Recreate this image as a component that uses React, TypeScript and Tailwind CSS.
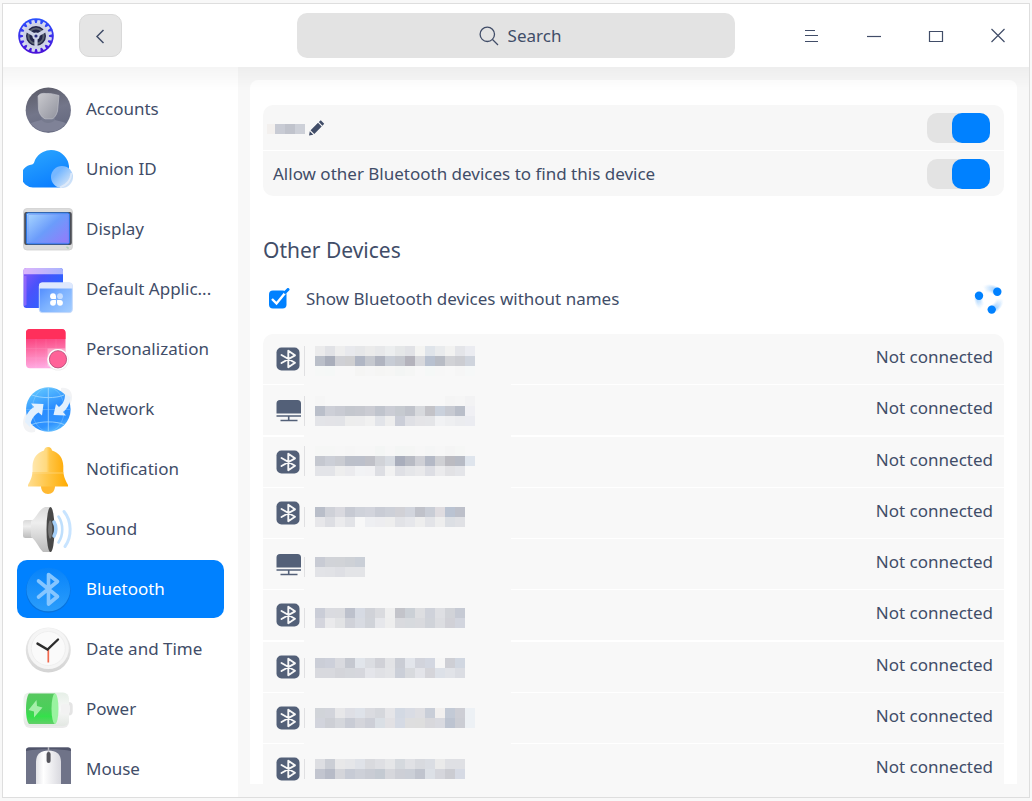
import type { ReactNode } from "react";

function Svg({ children }: { children: ReactNode }) {
  return (
    <svg viewBox="0 0 50 50" className="size-[50px] shrink-0" aria-hidden="true">
      {children}
    </svg>
  );
}

const icons: Record<string, ReactNode> = {
  accounts: (
    <Svg>
      <defs>
        <linearGradient id="ac1" x1="0" y1="0" x2="0.3" y2="1">
          <stop offset="0" stopColor="#5a5a66" />
          <stop offset="0.6" stopColor="#73768a" />
          <stop offset="1" stopColor="#666a80" />
        </linearGradient>
        <linearGradient id="ac2" x1="0" y1="0" x2="1" y2="1">
          <stop offset="0" stopColor="#c9c9ce" />
          <stop offset="1" stopColor="#90929d" />
        </linearGradient>
        <clipPath id="acc"><circle cx="25.3" cy="26.2" r="22" /></clipPath>
      </defs>
      <circle cx="25.3" cy="26.2" r="22.6" fill="url(#ac1)" />
      <g clipPath="url(#acc)">
        <path d="M1 50 V43 C7 38 13 38 18 36 H32 C38 38 44 38 50 43 V50Z" fill="#7f8297" />
        <path d="M1 50 V44 C12 49 38 49 50 44 V50Z" fill="#50556b" />
        <path d="M18.5 30 H32 V36 C28 40 22 40 18.5 36Z" fill="#767a8e" />
      </g>
      <path d="M15 12 C17 9.500 20 9 23 9.600 C28 9 31 10.500 36 11.500 L34.500 27 C33.500 31 31 34.500 29 34.800 H22 C18 33 16 29 15.500 25Z" fill="url(#ac2)" stroke="#bfc0c8" strokeWidth="0.7" />
    </Svg>
  ),
  cloud: (
    <Svg>
      <defs>
        <linearGradient id="cl1" x1="0.2" y1="0" x2="0.7" y2="1">
          <stop offset="0" stopColor="#2ba6ff" />
          <stop offset="1" stopColor="#0a7dff" />
        </linearGradient>
        <linearGradient id="cl2" x1="0" y1="0" x2="1" y2="1">
          <stop offset="0.3" stopColor="#76b7ff" />
          <stop offset="0.75" stopColor="#c5ddf8" />
          <stop offset="1" stopColor="#e4eefb" />
        </linearGradient>
      </defs>
      <path d="M11 43.5 A11 11 0 0 1 9 20.5 C11 19.5 11 19 12 16 A18 18 0 0 1 46 22 V35 C45 40 42 43.5 38 43.5Z" fill="url(#cl1)" />
      <circle cx="39" cy="33" r="11" fill="url(#cl2)" />
      <path d="M37 43.5 C44 41 48 36 48.5 29" fill="none" stroke="#e9f0fa" strokeWidth="2" opacity="0.7" />
    </Svg>
  ),
  display: (
    <Svg>
      <defs>
        <linearGradient id="di1" x1="0" y1="0.1" x2="1" y2="0.9">
          <stop offset="0" stopColor="#a6d4ff" />
          <stop offset="0.5" stopColor="#6b9cfb" />
          <stop offset="1" stopColor="#937bfa" />
        </linearGradient>
      </defs>
      <rect x="0.5" y="4.5" width="49" height="41.5" rx="3.5" fill="#dcdcdc" stroke="#cfcfcf" strokeWidth="0.8" />
      <rect x="1.2" y="8" width="47.6" height="33" rx="2" fill="#4b4d55" />
      <rect x="3.4" y="8.9" width="43" height="31" rx="1.5" fill="url(#di1)" stroke="#2676e8" strokeWidth="1" />
      <rect x="5" y="10.5" width="40" height="28" rx="1" fill="none" stroke="#6f8cf5" strokeWidth="0.5" />
      <path d="M44 42.5 v1.5 h2" fill="none" stroke="#9fc8a8" strokeWidth="0.9" />
    </Svg>
  ),
  apps: (
    <Svg>
      <defs>
        <linearGradient id="ap1" x1="0" y1="0" x2="0.8" y2="0.6">
          <stop offset="0" stopColor="#8a55f7" />
          <stop offset="0.5" stopColor="#4a52fb" />
          <stop offset="1" stopColor="#2e62ff" />
        </linearGradient>
        <linearGradient id="ap2" x1="0" x2="1">
          <stop offset="0" stopColor="#dcb4fb" />
          <stop offset="1" stopColor="#a9b4fd" />
        </linearGradient>
        <linearGradient id="ap3" x1="0" y1="0" x2="1" y2="1">
          <stop offset="0" stopColor="#4a86ff" />
          <stop offset="0.5" stopColor="#7db2ff" />
          <stop offset="1" stopColor="#a5ceff" />
        </linearGradient>
      </defs>
      <rect x="0.5" y="4" width="39.5" height="40" rx="3" fill="url(#ap1)" />
      <path d="M0.5 10.2 V7 a3 3 0 0 1 3-3 H37 a3 3 0 0 1 3 3 V10.2Z" fill="url(#ap2)" />
      <path d="M1 42 V12 h2.5 V41Z" fill="#a070fa" opacity="0.7" />
      <rect x="16.3" y="19" width="33" height="29.6" rx="3" fill="url(#ap3)" stroke="#c4d9fb" strokeWidth="1" />
      <path d="M16 24.5 V21.5 a3 3 0 0 1 3-3 H46.7 a3 3 0 0 1 3 3 V24.5Z" fill="#dfe9fd" />
      <g fill="#fff">
        <circle cx="30" cy="32.2" r="2.9" /><circle cx="37" cy="32.2" r="2.9" opacity="0.55" />
        <circle cx="30" cy="38.8" r="2.9" /><circle cx="37" cy="38.8" r="2.9" />
        <path d="M30 32 h2.9 v3 h-2.9z M34.1 36 h2.9 v3 h-2.9z M30 36 h2.9 v3 h-2.9z" />
      </g>
    </Svg>
  ),
  personal: (
    <Svg>
      <defs>
        <linearGradient id="pe1" x1="0.2" y1="0" x2="0.3" y2="1">
          <stop offset="0.25" stopColor="#fb4581" />
          <stop offset="0.6" stopColor="#fd78ae" />
          <stop offset="1" stopColor="#ffabe3" />
        </linearGradient>
      </defs>
      <rect x="3" y="5" width="39.5" height="39.3" rx="4" fill="url(#pe1)" />
      <path d="M13 15 V44 M23 15 V44 M33 15 V44 M3 24.5 H42 M3 34 H42" stroke="#fff" strokeWidth="0.5" opacity="0.15" />
      <path d="M3 15 V9 a4 4 0 0 1 4-4 H38.5 a4 4 0 0 1 4 4 V15Z" fill="#ff2f5b" />
      <rect x="24.5" y="24.5" width="18" height="18" fill="#fff" opacity="0.35" />
      <circle cx="35" cy="35.8" r="10.8" fill="#ededed" />
      <circle cx="35" cy="35.3" r="10.4" fill="#fff" />
      <circle cx="35" cy="35.3" r="8.6" fill="#ff6298" stroke="#b8507a" strokeWidth="0.9" />
    </Svg>
  ),
  network: (
    <Svg>
      <defs>
        <linearGradient id="ne1" x1="0.3" y1="0" x2="0.7" y2="1">
          <stop offset="0" stopColor="#60c6ff" />
          <stop offset="0.5" stopColor="#2a8dff" />
          <stop offset="0.8" stopColor="#2f93ff" />
          <stop offset="1" stopColor="#5abcff" />
        </linearGradient>
      </defs>
      <path d="M38 4 C45 3 49 7 49 13 C49 19 46 24 41 28 L38 20Z M12 48 C3 50 0 44 0 38 C1 32 3 27 7 24 L14 32Z" fill="#f2f3f5" />
      <circle cx="25.3" cy="25.5" r="22.3" fill="url(#ne1)" />
      <g fill="none" stroke="#a9dcff" strokeWidth="0.9">
        <ellipse cx="25.3" cy="25.5" rx="16" ry="22" opacity="0.35" />
        <path d="M3 25.5 H47.5" opacity="0.35" />
        <path d="M25.3 3.5 V47.5 M9 11 C18 14.5 33 14.5 41 11 M9 40.5 C18 37 33 37 41 40.5" opacity="0.85" />
      </g>
      <path d="M2 38 C3 30 6 26 11 23 L8 19.5 L20.5 20 L19 31.5 L15.5 28.5 C10 32 8 36 7 43Z" fill="#e2f0fe" />
      <path d="M47.5 13 C47 20 44 25 40 28 L43 31.5 L30.5 31 L33 20 L36 23 C40 20 42 16 42 10Z" fill="#e2f0fe" />
    </Svg>
  ),
  bell: (
    <Svg>
      <defs>
        <linearGradient id="be1" x1="0" x2="1">
          <stop offset="0" stopColor="#ffe7ad" />
          <stop offset="0.45" stopColor="#ffd97e" />
          <stop offset="0.55" stopColor="#ffc648" />
          <stop offset="1" stopColor="#ffae0e" />
        </linearGradient>
        <linearGradient id="be2" x1="0" x2="1">
          <stop offset="0" stopColor="#ffdd90" />
          <stop offset="0.5" stopColor="#ffc545" />
          <stop offset="1" stopColor="#ffab00" />
        </linearGradient>
      </defs>
      <path d="M18 42 H32 C32 47 29 50 25 50 C21 50 18 47 18 42Z" fill="#ffb931" />
      <path d="M25 3 C27.5 3 28.5 4.5 29 6.5 C36 8.5 40 14 40.3 22 V28.5 H9.5 V22 C10 14 14 8.5 21 6.5 C21.5 4.5 22.5 3 25 3Z" fill="url(#be1)" />
      <path d="M9.5 28 H40.3 C41 34 43 37 45 41 V42.5 H5 V41 C7 37 9 34 9.500 28Z" fill="url(#be2)" />
      <path d="M9.5 29 H40.3" stroke="#ffe3a0" strokeWidth="0.9" opacity="0.6" />
    </Svg>
  ),
  sound: (
    <Svg>
      <defs>
        <linearGradient id="so1" x1="0" y1="0" x2="0" y2="1">
          <stop offset="0" stopColor="#d9d9d9" />
          <stop offset="0.35" stopColor="#eeeeee" />
          <stop offset="1" stopColor="#bcbcbc" />
        </linearGradient>
      </defs>
      <rect x="0" y="16" width="11" height="18" rx="2.5" fill="url(#so1)" />
      <path d="M8 17 C13 15 15 6 22 3 H28 V48 H20 C15 43 13 36 8 33Z" fill="url(#so1)" />
      <ellipse cx="27.5" cy="25.5" rx="4" ry="22.5" fill="#484848" />
      <path d="M27 16 C30 18 30 33 27 35 C24.5 32 24.5 19 27 16Z" fill="#777" />
      <g fill="none" strokeLinecap="round">
        <path d="M31 18 C33.5 22 33.5 28 31 32" stroke="#a5cff8" strokeWidth="3.5" />
        <path d="M35.5 12.5 C40.5 20 40.5 31 35.5 38.5" stroke="#bfdffc" strokeWidth="2.6" />
        <path d="M41 7.5 C49 17 49 33 42 42.5" stroke="#c8e4ff" strokeWidth="3" />
      </g>
    </Svg>
  ),
  bluetooth: (
    <Svg>
      <defs>
        <linearGradient id="bl1" x1="0" y1="0" x2="0" y2="1">
          <stop offset="0" stopColor="#0783fa" />
          <stop offset="1" stopColor="#2b9dfb" />
        </linearGradient>
      </defs>
      <circle cx="25.3" cy="26.5" r="22.3" fill="#0873dd" />
      <circle cx="25.3" cy="25.5" r="21.8" fill="url(#bl1)" />
      <path d="M15.500 17 L34.500 32.500 L25.5 40 V10.5 L34.500 17.500 L15.500 33" fill="none" stroke="#86c6ff" strokeWidth="3.6" strokeLinejoin="round" strokeLinecap="round" />
    </Svg>
  ),
  clock: (
    <Svg>
      <defs>
        <linearGradient id="ck1" x1="0" y1="0" x2="0" y2="1">
          <stop offset="0" stopColor="#eeeeee" />
          <stop offset="1" stopColor="#d4d4d4" />
        </linearGradient>
      </defs>
      <circle cx="25.3" cy="26" r="22.5" fill="url(#ck1)" />
      <circle cx="25.3" cy="24.5" r="20.5" fill="#f5f5f5" />
      <circle cx="25.3" cy="24.5" r="17" fill="#fafafa" stroke="#ececec" strokeWidth="0.8" />
      <path d="M25.3 25.5 V38.500" stroke="#f0694e" strokeWidth="1.7" />
      <path d="M14.5 19.6 L24.5 25.5 L35 15.5" fill="none" stroke="#2c2c2c" strokeWidth="2.4" strokeLinecap="round" />
    </Svg>
  ),
  power: (
    <Svg>
      <defs>
        <linearGradient id="po1" x1="0" y1="0" x2="0" y2="1">
          <stop offset="0" stopColor="#58c860" />
          <stop offset="0.55" stopColor="#48d058" />
          <stop offset="0.75" stopColor="#34e04a" />
          <stop offset="1" stopColor="#62cf69" />
        </linearGradient>
        <linearGradient id="po2" x1="0" y1="0" x2="0" y2="1">
          <stop offset="0" stopColor="#e6efe7" />
          <stop offset="0.5" stopColor="#f8f8f8" />
          <stop offset="1" stopColor="#e3e8e3" />
        </linearGradient>
      </defs>
      <rect x="1" y="11" width="45" height="33" rx="6" fill="#000" opacity="0.08" />
      <rect x="40" y="18" width="9.7" height="13.5" rx="4" fill="#e4e4e4" />
      <rect x="0.5" y="8.5" width="45.5" height="33.5" rx="6" fill="url(#po2)" />
      <path d="M6 9.5 H32 V40 H6 C2 36 2 14 6 9.5Z" fill="url(#po1)" />
      <ellipse cx="32" cy="24.8" rx="3.5" ry="15.3" fill="#9af3a0" />
      <rect x="38" y="20" width="9" height="10" rx="3" fill="#f2f2f2" />
      <path d="M13.5 16 L5.5 26 L11 27.5 L11 33.500 L19.5 23.5 L14 22Z" fill="#a5efa9" />
    </Svg>
  ),
  mouse: (
    <Svg>
      <defs>
        <linearGradient id="mo1" x1="0" x2="1">
          <stop offset="0" stopColor="#e2e2e6" />
          <stop offset="0.3" stopColor="#ffffff" />
          <stop offset="1" stopColor="#d9d9df" />
        </linearGradient>
      </defs>
      <rect x="3" y="3.5" width="45" height="46" rx="3" fill="#6f7388" />
      <path d="M3 7 V6.5 a3 3 0 0 1 3-3 H45 a3 3 0 0 1 3 3 V7 C40 4.5 11 4.500 3 7Z" fill="#50546a" />
      <path d="M13 18 C13 10 18 6.5 25.5 6.5 C33 6.5 38 10 38 18 V50 H13Z" fill="url(#mo1)" />
      <path d="M25.5 3 V9" stroke="#b5b5bd" strokeWidth="1.5" />
      <rect x="23.600" y="8" width="4" height="11" rx="2" fill="#55555c" />
    </Svg>
  ),
};

const nav = [
  ["accounts", "Accounts"],
  ["cloud", "Union ID"],
  ["display", "Display"],
  ["apps", "Default Applic..."],
  ["personal", "Personalization"],
  ["network", "Network"],
  ["bell", "Notification"],
  ["sound", "Sound"],
  ["bluetooth", "Bluetooth"],
  ["clock", "Date and Time"],
  ["power", "Power"],
  ["mouse", "Mouse"],
];

type Device = { kind: "bt" | "pc"; y: number; rows: string[] };

/* Each string lists the hex colours of one row of 10px blocks hiding a device name. */
const devices: Device[] = [
  { kind: "bt", y: 12, rows: [
    "ebebec e1e2e6 eeeeee e8e9ed e6e7e9 ebebeb e7e8ea eceeef e5e7e8 e1e2e6 f4f4f2 dfe4ea e9ebed f2f2f1 e4e5e9 ebecf1",
    "babfc9 a9aebb cfd0d5 cfcfd1 b0b6c4 c5c8cf b0b4c0 c7ccd5 c4c7ce b4b3bc d7d8dc b8c1d0 b8bcc5 d1d2d6 cccdd2 cfd4dd",
    "f6f8f7 f5f8f7 f8f8f8 f8f8f8 f5f5f4 f6f6f6 f5f5f4 f6f6f5 f3f5f4 f5f6f5 f8f8f8 f5f8f7 f7f7f7 f8f8f8 f6f6f6 f6f8f8" ] },
  { kind: "pc", y: 11, rows: [
    "f6f6f6 f8f8f8 f8f8f8 f8f8f8 f8f8f8 f8f8f8 f8f8f8 f8f8f8 f8f8f8 f8f8f8 f8f8f8 f8f8f8 f8f8f8 f5f5f5 f6f6f6 f3f3f4",
    "babfca cdcfd7 c9cbd3 c4c7ce c6c8cf cbccd3 c0c4cd cbcdd5 c6cad0 c0c3cb d7d9dd c3c3c8 cad1dc c7cad2 b9bec9 f0f0f4",
    "e3e4e8 e3e3e7 e2e3e7 ededed ededee f1f1f1 e2e4e9 eeeeee cbced8 dfe0e5 e4e4e7 e4e5e8 f1f2f4 eeeff1 ebecef ebecf1" ] },
  { kind: "bt", y: 9, rows: [
    "f6f7f6 f6f7f6 f7f7f7 f6f6f6 f7f7f7 f7f7f7 f4f6f5 f7f7f7 f4f6f5 f5f6f5 f7f7f7 f5f6f6 f7f7f7 f5f5f5 f6f7f6 f8f8f8",
    "c5c8d0 cccfd7 caccd2 bcc0ca bcc0cb c0c1c8 d1d3d8 d8dce2 a9aebc b8bbc4 cfd0d6 b4b9c6 cfd0d4 bbbbc1 b7bbc5 dfe5ed",
    "e3e4e8 e3e4e8 eeeeee ebebee f2f3f5 f2f2f4 dddee3 f2f2f2 dfe0e5 e5e6e9 e9e9eb dddee4 ebebed e2e2e5 e4e5e9 f8f8f8" ] },
  { kind: "bt", y: 19, rows: [
    "b9bec9 cfd1d8 d9d9df c7cad3 cfd2da d2d4dc c9ccd5 cdd0d8 d1d1d6 d2d5dd c0c2ca c9cdd6 dfdce0 bac3d2 bdc0ca",
    "e7e7ea dddee3 ebebed e2e3e7 f8f8f8 eeeff2 ededf0 eeeeee e2e3e7 e6e7eb eeeeee e3e4e8 eeeeee dcdfe4 e0e1e5" ] },
  { kind: "pc", y: 18, rows: ["c8cbd4 d1d3d8 d1d3d7 ced1d6 cacfd7", "e2e3e7 e1e2e6 dedfe4 e3e4e7 e3e4e7"] },
  { kind: "bt", y: 18, rows: [
    "cacdd7 dadbe0 dadbdf bdc1cc d6dae3 d0d2d8 dadbdf efefef c3c4ca cbd0d6 dddee1 cfd2da dedfe3 d1d3d8 c6cad4",
    "d4d5dd eaeaec e2e3e5 d0d2d9 d8dbe2 d0d3d9 e6e7eb eeeeee d9dade d7dade d9dade d0d3d9 dcdde1 d1d1d7 d2d5de" ] },
  { kind: "bt", y: 16, rows: [
    "cbced7 cdd0da d9dadf c5c8d0 e1e5eb dbdde2 d0d1d7 e2e3e6 cacdd5 e2e5eb d2d4dc d3d7e1 f6f6f6 cecfd5 d1d7e1",
    "d8d9de d8d9de d4d5da d5d7dc d6d7dd e4e5ea e0e1e5 e3e4e7 cbcfd8 d8dade e3e4e9 d5d5da dde1e8 e1e3e8 dbdde3" ] },
  { kind: "bt", y: 15, rows: [
    "d1d4d9 d2d4db e7e7e9 dedfe5 dee2e9 dadbe0 d5d7dc e5e5e8 d3d9e3 d9dce4 dedee2 c9ced8 f2f0ef c3cad6 cdced5 edf1f5",
    "d2d4dc cdcfd5 d5d7dc c9ccd5 d4d5db cdcfd7 dadfe5 e2e1e4 d5dae4 dededf dedede d8d8dc d9dae0 bdc4d1 cbcdd4 edf1f5" ] },
  { kind: "bt", y: 15, rows: [
    "dddee2 cbced5 e8e8e9 e5e6e9 dfe2e8 d9dade dedfe3 e5e6e8 d5d9de e0e1e5 d8dadf dadde3 eaeaea dfe0e4 dfe0e4",
    "c2c5cf b7bbc7 d4d5da c7cbd5 cdd0d8 c9ccd4 c4cad2 d6d7dc cdcfd6 cbcfd7 c0c4ce dce0e6 d5d6dc cbccd2 d6dae4" ] },
];

function Mosaic({ y, rows }: { y: number; rows: string[] }) {
  return (
    <svg width="181" height="50" viewBox="0 0 181 50" shapeRendering="crispEdges" aria-hidden="true">
      <rect x="0" y={y} width="1" height={rows.length * 10} fill="#e0e0e2" />
      {rows.map((row, r) =>
        row.split(" ").map((c, i) => (
          <rect key={`${r}-${i}`} x={11 + i * 10} y={y + r * 10} width="10" height="10" fill={`#${c}`} />
        ))
      )}
    </svg>
  );
}

function DeviceIcon({ kind }: { kind: "bt" | "pc" }) {
  return kind === "bt" ? (
    <svg viewBox="0 0 25 24" className="h-6 w-[25px]" aria-hidden="true">
      <rect x="0.5" y="0.5" width="23" height="23" rx="5" fill="#536078" />
      <path d="M5.5 8 L19 15.8 L12.3 20.3 V3.7 L19 8.3 L5.5 16" fill="none" stroke="#f8f8f8" strokeWidth="1.9" strokeLinejoin="round" strokeLinecap="round" />
    </svg>
  ) : (
    <svg viewBox="0 0 25 24" className="h-6 w-[25px]" aria-hidden="true">
      <path d="M0.500 15.500 V5.500 a3.500 3.500 0 0 1 3.500-3.500 H21.500 a3.500 3.500 0 0 1 3.500 3.500 V15.500Z" fill="#536078" />
      <path d="M0.500 18 H25 M12.700 18 V22 M4.500 22.500 H21.500" fill="none" stroke="#536078" strokeWidth="1.600" />
    </svg>
  );
}

function Toggle({ label, id }: { label?: string; id: string }) {
  return (
    <input
      id={id}
      type="checkbox"
      role="switch"
      defaultChecked
      aria-label={label}
      className="block h-[30px] w-[63px] shrink-0 appearance-none rounded-[10px] bg-[#e3e3e3] before:block before:h-full before:w-[38px] before:rounded-[10px] before:bg-[#0081ff] checked:before:ml-auto"
    />
  );
}

function Logo() {
  return (
    <svg viewBox="0 0 36 36" className="size-9 shrink-0" aria-label="Control Center" role="img">
      <defs>
        <linearGradient id="lg" x1="0" y1="0" x2="0" y2="1">
          <stop offset="0" stopColor="#2a52ff" />
          <stop offset="1" stopColor="#4a10d8" />
        </linearGradient>
      </defs>
      <circle cx="18" cy="18" r="17.8" fill="url(#lg)" />
      {Array.from({ length: 16 }, (_, i) => (
        <path key={i} d="M16.5 2 h3 l0.4 5 h-3.800z" fill="#d5daf0" transform={`rotate(${i * 22.5 + 11} 18 18)`} />
      ))}
      <circle cx="18" cy="18" r="11.5" fill="#23264a" stroke="#cdd2e6" strokeWidth="3" />
      <circle cx="18" cy="18" r="7.6" fill="none" stroke="#5a6270" strokeWidth="2" />
      <path d="M18 18 L8.500 12.500 M18 18 L27.500 12.500 M18 18 V29" stroke="#cdd2e6" strokeWidth="3.2" />
      <circle cx="18" cy="18" r="3.6" fill="#cdd2e6" />
      <circle cx="18" cy="18" r="1.6" fill="#2a2d80" />
    </svg>
  );
}

const windowControls = [
  { label: "Menu", d: "M3 4.500 H13 M3 9.500 H16 M3 15.500 H16" },
  { label: "Minimize", d: "M3 10.500 H17" },
  { label: "Maximize", d: "M3.500 5.500 H16.500 V15.500 H3.500Z" },
  { label: "Close", d: "M3.500 3 L16.500 16 M16.500 3 L3.500 16" },
];

export default function App() {
  return (
    <div className="h-screen bg-[#f8f8f8] px-[2px] py-[3px] font-['Noto_Sans',sans-serif] text-[17px] leading-6 text-[#414d68]">
      <div className="flex h-full flex-col border border-[#dedede] bg-white">
        <header className="grid h-[63px] shrink-0 grid-cols-[1fr_minmax(0,438px)_1fr] items-center">
          <div className="flex items-center gap-[25px] pl-[15px]">
            <Logo />
            <button type="button" aria-label="Back" className="flex size-[43px] items-center justify-center rounded-[10px] border border-[#d9d9d9] bg-[#e5e5e5]">
              <svg viewBox="0 0 20 20" className="size-5" fill="none" stroke="#414d68" strokeWidth="1.5" aria-hidden="true">
                <path d="M12.500 4 L6 10.500 L12.500 17" />
              </svg>
            </button>
          </div>
          <label className="flex h-[45px] items-center justify-center gap-[9px] rounded-[10px] bg-[#e3e3e3] pl-2">
            <svg viewBox="0 0 20 20" className="size-5" fill="none" stroke="#414d68" strokeWidth="1.3" aria-hidden="true">
              <circle cx="8.3" cy="8.3" r="7.2" />
              <path d="M13.5 13.5 L19 19" />
            </svg>
            <input type="text" aria-label="Search" placeholder="Search" className="field-sizing-content bg-transparent outline-none placeholder:text-[#414d68]" />
          </label>
          <div className="flex justify-end">
            {windowControls.map((c) => (
              <button key={c.label} type="button" aria-label={c.label} className="flex h-11 w-[62px] items-center justify-center">
                <svg viewBox="0 0 20 20" className="size-5" fill="none" stroke="#414d68" strokeWidth="1.2" aria-hidden="true">
                  <path d={c.d} />
                </svg>
              </button>
            ))}
          </div>
        </header>

        <div className="relative flex min-h-0 flex-1 bg-[#f8f8f8]">
          <div className="pointer-events-none absolute inset-x-0 top-0 z-10 h-6 bg-linear-to-b from-black/4 to-transparent" />
          <aside className="flex w-[235px] shrink-0 flex-col bg-white py-[13px]">
            <nav className="min-h-0 flex-1 overflow-y-auto px-[14px] [scrollbar-width:none]">
              <ul className="flex flex-col gap-[2px]">
                {nav.map(([key, label]) => (
                  <li key={key}>
                    <a
                      href={`#${key}`}
                      aria-current={key === "bluetooth" ? "page" : undefined}
                      className="flex h-[58px] items-center gap-[13px] rounded-[10px] pl-[6px] aria-[current=page]:bg-[#0081ff] aria-[current=page]:text-white"
                    >
                      {icons[key]}
                      <span>{label}</span>
                    </a>
                  </li>
                ))}
              </ul>
            </nav>
          </aside>

          <main className="mx-3 my-[13px] flex-1 overflow-y-auto rounded-t-lg bg-white px-[13px] pt-[25px] [scrollbar-width:none]">
            <section className="flex flex-col gap-px overflow-hidden rounded-[10px]">
              <div className="flex h-[45px] items-center justify-between bg-[#f7f7f7] pr-[14px] pl-1">
                <div className="flex items-center gap-1">
                  <svg width="38" height="14" viewBox="0 0 38 14" shapeRendering="crispEdges" aria-hidden="true">
                    <rect x="0" y="3" width="8" height="10" fill="#f3f0ee" />
                    <rect x="8" y="3" width="10" height="10" fill="#c8cbd4" />
                    <rect x="18" y="3" width="10" height="10" fill="#c0c3cc" />
                    <rect x="28" y="3" width="10" height="10" fill="#cdd0d8" />
                  </svg>
                  <button type="button" aria-label="Rename this device">
                    <svg viewBox="0 0 16 16" className="size-4" fill="#414d68" aria-hidden="true">
                      <path d="M0 15.500 L0.800 11.200 L4.300 14.700Z M1.600 10.200 L9 2.800 L12.700 6.500 L5.300 13.900Z M9.800 2 L11.800 0.300 L15.200 3.700 L13.500 5.700Z" />
                    </svg>
                  </button>
                </div>
                <Toggle id="bt-power" label="Bluetooth" />
              </div>
              <div className="flex h-[45px] items-center justify-between bg-[#f7f7f7] pr-[14px] pl-[10px]">
                <label htmlFor="bt-discover">Allow other Bluetooth devices to find this device</label>
                <Toggle id="bt-discover" />
              </div>
            </section>

            <h2 className="mt-10 text-[21px] leading-7">Other Devices</h2>
            <div className="mt-5 mb-5 flex h-[30px] items-center justify-between">
              <label className="flex items-center gap-4 pl-[5px]">
                <span className="grid">
                  <input type="checkbox" defaultChecked className="peer col-start-1 row-start-1 size-[22px] appearance-none" />
                  <svg viewBox="0 0 22 22" className="pointer-events-none col-start-1 row-start-1 size-[22px]" aria-hidden="true">
                    <rect x="1" y="2.5" width="17.500" height="18" rx="4" fill="#0081ff" />
                    <path d="M4 11 L8.500 15.500 L17.500 4.500" fill="none" stroke="#fff" strokeWidth="2.4" />
                    <path d="M17.300 4.300 L20 1.500" stroke="#0081ff" strokeWidth="3" strokeLinecap="round" />
                  </svg>
                </span>
                <span>Show Bluetooth devices without names</span>
              </label>
              <div role="status" aria-label="Scanning" className="relative size-[30px]">
                <div className="absolute inset-0 rounded-full bg-[conic-gradient(from_47deg,#8cc6ff00_40deg,#8cc6ff_115deg,#8cc6ff00_117deg,#8cc6ff00_172deg,#8cc6ff_247deg,#8cc6ff00_249deg,#8cc6ff00_285deg,#8cc6ff_360deg)] mask-[radial-gradient(circle,transparent_6px,black_9px,black_12px,transparent_15px)]" />
                <svg viewBox="0 0 30 30" className="relative size-full" fill="#0081ff" aria-hidden="true">
                  <circle cx="5" cy="11.700" r="4.200" />
                  <circle cx="23.300" cy="7.700" r="4.200" />
                  <circle cx="17.700" cy="25.600" r="4.200" />
                </svg>
              </div>
            </div>

            <ul className="rounded-t-[10px] bg-[#f8f8f8]">
              {devices.map((d, i) => (
                <li key={i}>
                  <div className="flex h-[50px] items-center pr-[11px] pl-[13px]">
                    <DeviceIcon kind={d.kind} />
                    <div className="flex-1 pl-[3px]">
                      <Mosaic y={d.y} rows={d.rows} />
                    </div>
                    <span className="pb-1">Not connected</span>
                  </div>
                  {i < devices.length - 1 && (
                    <div className={i % 4 === 1 ? "flex h-[2px] justify-between gap-[207px]" : "flex h-px justify-between gap-[207px]"}>
                      <span className="w-[41px] bg-white" />
                      <span className="flex-1 bg-white" />
                    </div>
                  )}
                </li>
              ))}
            </ul>
          </main>
        </div>
      </div>
    </div>
  );
}
